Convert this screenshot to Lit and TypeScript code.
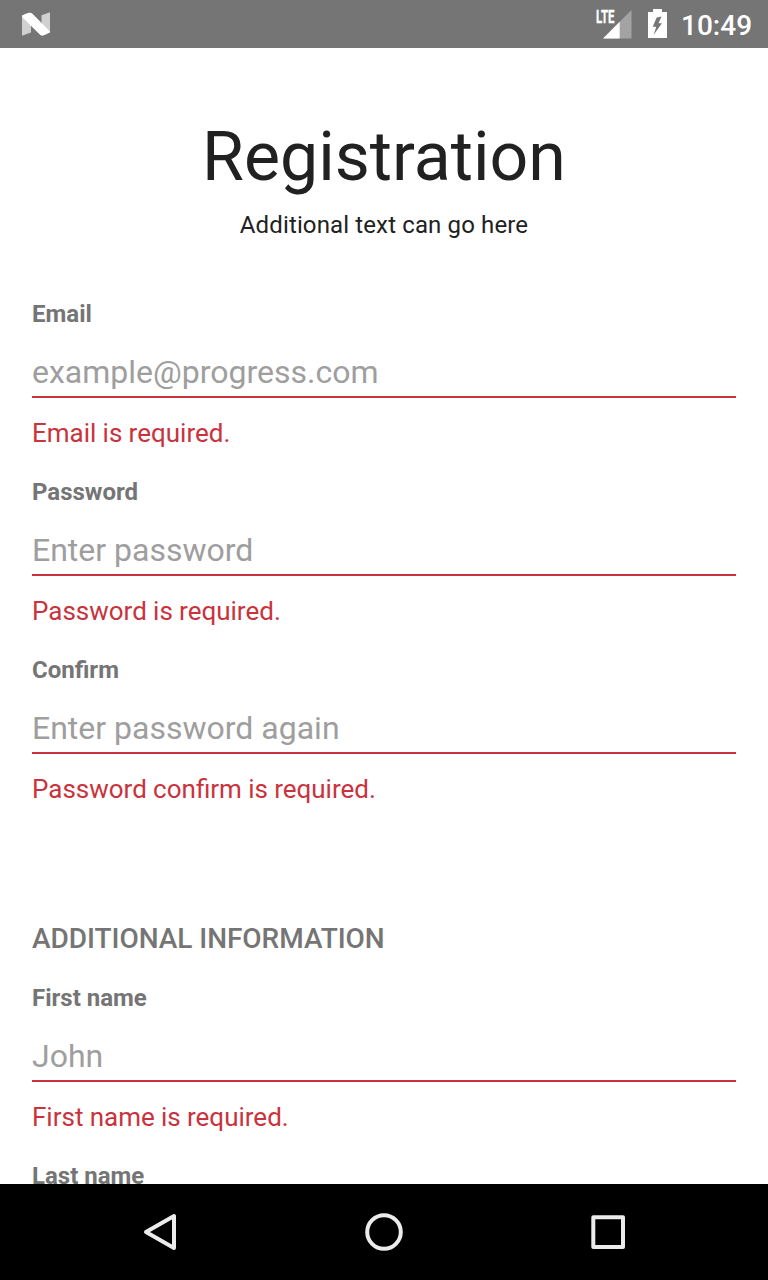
import { LitElement, html, css } from "lit";
import { customElement, property } from "lit/decorators.js";

@customElement("form-field")
class FormField extends LitElement {
  @property() label = "";
  @property() hint = "";
  @property() error = "";
  static styles = css`
    :host { display: block; height: 178px; box-sizing: border-box; }
    .label { font-weight: 700; font-size: 24px; line-height: 28px; height: 28px; color: #757575; }
    input { display: block; width: 100%; box-sizing: border-box; height: 50px; margin: 20px 0 0; padding: 0; border: 0;
      border-bottom: 2px solid #c9333d; outline: 0; border-radius: 0; background: none; font: 32px/48px Roboto, sans-serif; color: #212121; }
    input::placeholder { color: #9e9e9e; opacity: 1; }
    .error { font-size: 26px; line-height: 30px; margin-top: 20px; color: #c9333d; word-spacing: -0.2px; }
  `;
  render() {
    return html`<div class="label">${this.label}</div>
      <input placeholder=${this.hint} />
      ${this.error ? html`<div class="error">${this.error}</div>` : ""}`;
  }
}

@customElement("app-root")
class AppRoot extends LitElement {
  static styles = css`
    :host { display: flex; flex-direction: column; height: 1280px; width: 768px; background: #fff; overflow: hidden;
      font-family: Roboto, sans-serif; color: #212121; }
    .status { height: 48px; flex: none; background: #757575; display: flex; }
    .status svg { display: block; }
    .lte { font: 700 17.5px Roboto, sans-serif; stroke: #fff; stroke-width: 0.3px; }
    .spacer { flex: 1; }
    .time { color: #fff; font-weight: 500; font-size: 28px; line-height: 52px; height: 48px; width: 87px; }
    main { flex: 1; min-height: 0; overflow: hidden; padding: 0 32px; }
    h1 { margin: 69px 0 0; font-weight: 400; font-size: 68px; line-height: 80px; text-align: center; }
    .sub { margin: 14px 0 0; font-size: 24px; line-height: 28px; text-align: center; letter-spacing: 0.13px; }
    .account { padding-top: 61px; }
    h2 { margin: 88px 0 0; font-weight: 500; font-size: 28px; line-height: 34px; color: #757575; padding-bottom: 28px; letter-spacing: -0.04px; }
    nav { height: 96px; flex: none; background: #000; display: flex; justify-content: center; }
    nav svg { display: block; }
  `;
  render() {
    return html`
      <div class="status">
        <svg width="72" height="48">
          <path d="M22 15L31 21V32.500L22 35.700ZM41.500 15.200L50 12.300V32.500L41.500 27Z" fill="#d0d0d0"/>
          <path d="M22 15.500Q26 13.500 29 12.800Q31 12.400 32.500 13.700L50 31.500V32.500L44 35.200Q41.500 36.300 39.800 34.600L22 17Z" fill="#fff"/>
        </svg>
        <div class="spacer"></div>
        <svg width="88" height="48" viewBox="593 0 88 48">
          <path d="M603 38.500L631.500 10V38.500Z" fill="#a3a3a3"/>
          <path d="M603 38.500L619.700 21.800V38.500Z" fill="#fff"/>
          <text class="lte" x="596" y="22.700" textLength="18.500" lengthAdjust="spacingAndGlyphs" fill="#fff">LTE</text>
          <path d="M653 9H662V12H667V38H648V12H653Z" fill="#fff"/>
          <path d="M661.500 16.500L656.700 17.500L652.700 26.800H656.300L653.500 35L662 23.300H658.500Z" fill="#757575"/>
        </svg>
        <div class="time">10:49</div>
      </div>
      <main>
        <h1>Registration</h1>
        <p class="sub">Additional text can go here</p>
        <div class="account">
          <form-field label="Email" hint="example@progress.com" error="Email is required."></form-field>
          <form-field label="Password" hint="Enter password" error="Password is required."></form-field>
          <form-field label="Confirm" hint="Enter password again" error="Password confirm is required."></form-field>
        </div>
        <h2>ADDITIONAL INFORMATION</h2>
        <form-field label="First name" hint="John" error="First name is required."></form-field>
        <form-field label="Last name" hint="Smith"></form-field>
      </main>
      <nav>
        <svg width="768" height="96" fill="none" stroke="#ececec" stroke-width="4" stroke-linejoin="round">
          <path d="M174 32V64L146 48Z"/><circle cx="384" cy="48" r="16.800"/><rect x="593.300" y="33.300" width="29.700" height="29.700"/>
        </svg>
      </nav>`;
  }
}
